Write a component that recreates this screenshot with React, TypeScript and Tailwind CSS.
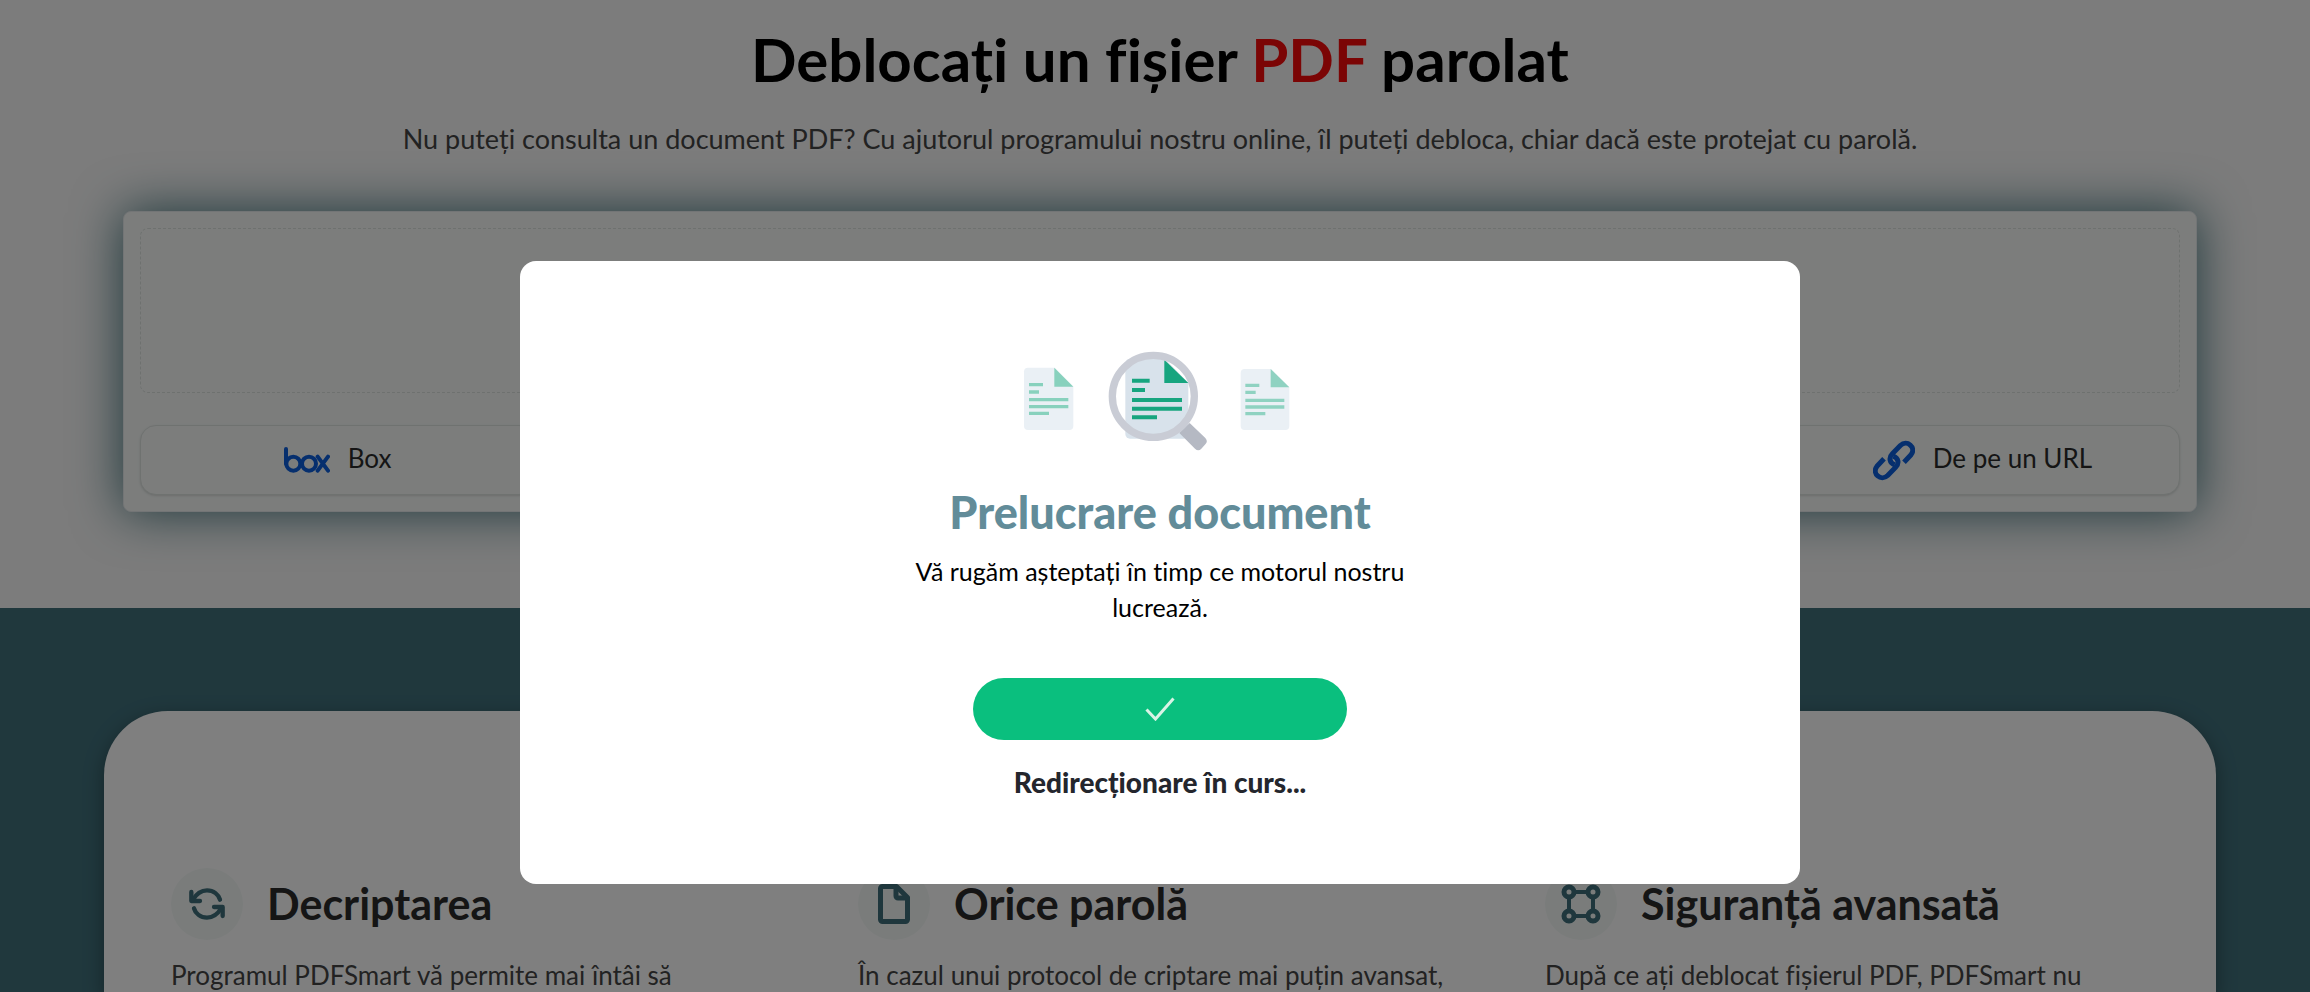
import type { ReactNode } from "react";

interface Feature {
  title: string;
  text: string;
  icon: ReactNode;
}

function RefreshIcon() {
  return (
    <svg viewBox="0 0 108 96" className="w-9 h-8" fill="none" stroke="#3f6f7a" strokeWidth="13" strokeLinecap="round" strokeLinejoin="round" aria-hidden="true">
      <path d="M7 12v27h26" />
      <path d="M11 36C24 14 38 7 54 7c20 0 35 13 39 28" />
      <path d="M101 84V57H75" />
      <path d="M97 60C84 82 70 89 54 89c-20 0-35-13-39-28" />
    </svg>
  );
}

function FileIcon() {
  return (
    <svg viewBox="0 0 32 40" className="w-8 h-10" fill="none" stroke="#3f6f7a" strokeWidth="5" strokeLinecap="round" strokeLinejoin="round" aria-hidden="true">
      <path d="M2.500 4.500a2 2 0 0 1 2-2h14l11 11v22a2 2 0 0 1-2 2h-23a2 2 0 0 1-2-2z" />
      <path d="M18 3v9a2 2 0 0 0 2 2h9" />
    </svg>
  );
}

function NodesIcon() {
  return (
    <svg viewBox="0 0 40 40" className="w-10 h-10" fill="none" stroke="#3f6f7a" strokeWidth="5" aria-hidden="true">
      <circle cx="8" cy="8" r="5" />
      <circle cx="32" cy="8" r="5" />
      <circle cx="8" cy="32" r="5" />
      <circle cx="32" cy="32" r="5" />
      <path d="M13 8h14M13 32h14M8 13v14M32 13v14" strokeWidth="4" />
    </svg>
  );
}

function BoxLogo() {
  return (
    <svg viewBox="0 0 138 78" className="w-[46px] h-[26px]" fill="none" stroke="#0c5fdc" strokeWidth="12" strokeLinecap="round" aria-hidden="true">
      <path d="M6 6v45" />
      <circle cx="28" cy="50" r="21" />
      <circle cx="75" cy="50" r="21" />
      <path d="M101 29l31 42M132 29l-31 42" />
    </svg>
  );
}

function LinkIcon() {
  return (
    <svg viewBox="0 0 126 122" className="w-[42px] h-[41px]" fill="none" stroke="#0c5fdc" strokeWidth="15" aria-hidden="true">
      <path d="M65 74c-16-6-18-22-7-33l24-25c20-19 49 6 32 28l-21 22" />
      <path d="M61 48c16 6 18 22 7 33l-24 25c-20 19-49-6-32-28l21-22" />
    </svg>
  );
}

function ScanIllustration() {
  return (
    <svg viewBox="0 0 1080 450" className="w-[360px] h-[150px]" aria-hidden="true">
      <g>
        <path d="M144 143h80l56 57v118a12 12 0 0 1-12 12H144a12 12 0 0 1-12-12V155a12 12 0 0 1 12-12z" fill="#eaf0f5" />
        <path d="M223 143l57 57h-57z" fill="#88d1bd" />
        <path d="M147 189h42v10h-42zM147 211h30v10h-30zM147 234h118v10H147zM147 255h118v10H147zM147 275h60v10h-60z" fill="#88d1bd" />
      </g>
      <g>
        <path d="M794 147h79l55 55v116a12 12 0 0 1-12 12H794a12 12 0 0 1-12-12V159a12 12 0 0 1 12-12z" fill="#eaf0f5" />
        <path d="M872 147l56 55h-56z" fill="#8fd2c1" />
        <path d="M796 191h42v10h-42zM796 212h31v10h-31zM796 236h117v10H796zM796 256h117v10H796zM796 276h60v10h-60z" fill="#8fd2c1" />
      </g>
      <path d="M450 116h104l71 72v154a14 14 0 0 1-14 14H450a14 14 0 0 1-14-14V130a14 14 0 0 1 14-14z" fill="#d8e2eb" />
      <path d="M553 119l72 70h-72z" fill="#17a57f" />
      <path d="M456 176h53v12h-53zM456 204h39v12h-39zM456 234h150v12H456zM456 260h150v12H456zM456 286h75v12h-75z" fill="#17a57f" />
      <path d="M598 339l31-30 47 45q9 10 0 19l-12 13q-9 9-19 0z" fill="#b5b9c3" />
      <circle cx="520" cy="229" r="123" fill="none" stroke="#c9ccd5" strokeWidth="22" />
    </svg>
  );
}

const features: Feature[] = [
  { title: "Decriptarea", text: "Programul PDFSmart vă permite mai întâi să", icon: <RefreshIcon /> },
  { title: "Orice parolă", text: "În cazul unui protocol de criptare mai puțin avansat,", icon: <FileIcon /> },
  { title: "Siguranță avansată", text: "După ce ați deblocat fișierul PDF, PDFSmart nu", icon: <NodesIcon /> },
];

const sourceButton =
  "flex h-[70px] items-center justify-center gap-[18px] rounded-2xl border border-[#dfe4e1] bg-[#f8fbf9] text-[26px] text-[#2b2b2b] shadow-sm";

function UnlockSection() {
  return (
    <section className="bg-[#f8f8f8] pt-[23px] pb-24 pl-[123px] pr-[113px]">
      <h1 className="text-center text-[60px] leading-[72px] font-bold text-black">
        Deblocați un fișier <span className="text-[#f70a0a]">PDF</span> parolat
      </h1>
      <p className="mt-6 text-center text-[27px] leading-10 text-[#444]">
        Nu puteți consulta un document PDF? Cu ajutorul programului nostru online, îl puteți debloca, chiar dacă este protejat cu parolă.
      </p>
      <div className="mt-[52px] rounded-lg border border-[#e6eaec] bg-[#f8fbf9] p-4 shadow-[0_0_50px_#3a6e76]">
        <div className="h-[165px] rounded-lg border border-dashed border-[#dde2df]" />
        <div className="mt-8 grid grid-cols-5 gap-4">
          <button type="button" className={sourceButton}>
            <BoxLogo />
            <span className="pb-1">Box</span>
          </button>
          <button type="button" className={`${sourceButton} col-start-5`}>
            <LinkIcon />
            <span className="pb-1">De pe un URL</span>
          </button>
        </div>
      </div>
    </section>
  );
}

function FeatureSection() {
  return (
    <section className="flex-1 bg-[#40707b] pt-[103px] pl-[104px] pr-[94px]">
      <div className="grid h-full grid-cols-3 gap-[83px] rounded-t-[64px] bg-white px-[67px] pt-[157px] shadow-[0_6px_20px_rgba(0,0,0,0.35)]">
        {features.map((feature) => (
          <article key={feature.title}>
            <div className="flex items-center gap-6">
              <div className="flex size-[72px] shrink-0 items-center justify-center rounded-full bg-[#f4f9f7]">
                {feature.icon}
              </div>
              <h2 className="text-[43px] leading-[52px] font-bold text-[#2b2b2b]">{feature.title}</h2>
            </div>
            <p className="mt-[15px] text-[26px] leading-10 whitespace-nowrap text-[#444]">{feature.text}</p>
          </article>
        ))}
      </div>
    </section>
  );
}

function ProcessingDialog() {
  return (
    <div className="fixed inset-0 flex items-start justify-center bg-black/50 pt-[261px] pl-[10px]">
      <div role="dialog" aria-modal="true" aria-labelledby="dialog-title" className="flex w-full max-w-[1280px] flex-col items-center rounded-2xl bg-white pt-[59px] pb-[84px] text-center">
        <ScanIllustration />
        <h2 id="dialog-title" className="mt-[14px] text-[45px] leading-[56px] font-black text-[#628c99]">
          Prelucrare document
        </h2>
        <p className="mt-[13px] w-[500px] text-[25px] leading-9 text-black">Vă rugăm așteptați în timp ce motorul nostru lucrează.</p>
        <button type="button" aria-label="OK" className="mt-[53px] flex h-[62px] w-[374px] items-center justify-center rounded-full bg-[#0abf7e]">
          <svg viewBox="0 0 30 24" className="w-[30px] h-6" fill="none" stroke="#d8f3e6" strokeWidth="3" aria-hidden="true">
            <path d="M1.500 12.500l9 9.500L28.500 1.500" />
          </svg>
        </button>
        <p className="mt-6 text-[28px] leading-9 font-black text-[#24262d]">Redirecționare în curs...</p>
      </div>
    </div>
  );
}

export default function App() {
  return (
    <div className="flex h-screen flex-col overflow-hidden font-['Lato','Open_Sans',sans-serif] [font-variant-ligatures:no-common-ligatures]">
      <UnlockSection />
      <FeatureSection />
      <ProcessingDialog />
    </div>
  );
}
